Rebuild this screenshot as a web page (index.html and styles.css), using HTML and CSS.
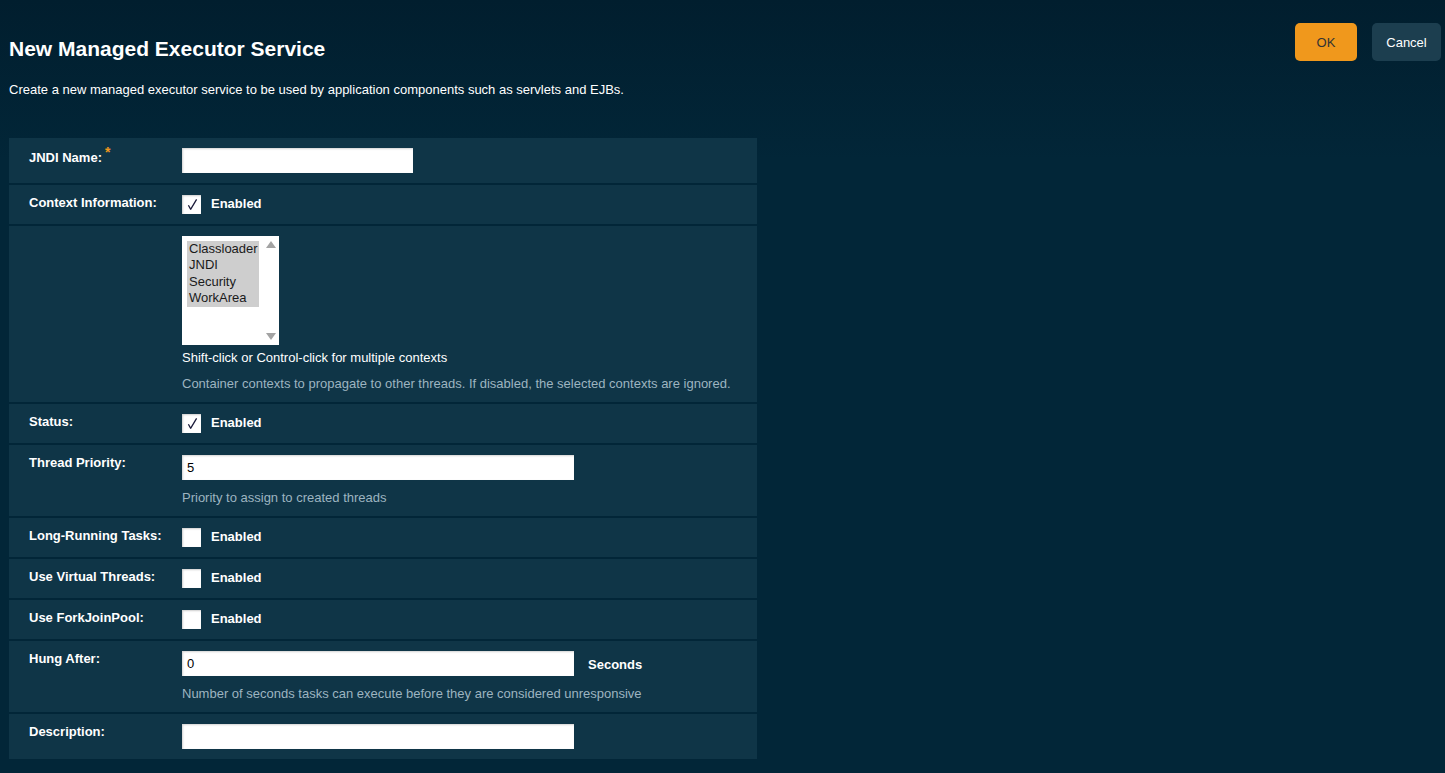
FILE: index.html
```html
<!DOCTYPE html>
<html>
<head>
<meta charset="utf-8">
<title>New Managed Executor Service</title>
<link rel="stylesheet" href="styles.css">
</head>
<body>
<div class="page">
  <header class="header">
    <div class="intro">
      <h1 class="title">New Managed Executor Service</h1>
      <p class="lead">Create a new managed executor service to be used by application components such as servlets and EJBs.</p>
    </div>
    <div class="actions">
      <button class="btn btn-ok">OK</button>
      <button class="btn btn-cancel">Cancel</button>
    </div>
  </header>

  <div class="form">
    <div class="row">
      <div class="label label-req">JNDI Name:<span class="req">*</span></div>
      <div class="control"><div class="input input-short"></div></div>
    </div>

    <div class="row">
      <div class="label">Context Information:</div>
      <div class="control">
        <div class="check-line">
          <span class="checkbox"><svg width="19" height="19" viewBox="0 0 19 19"><path d="M6.4 10.2 L8.6 14.3 L14.6 4.4" fill="none" stroke="#1b1b3a" stroke-width="1.3" stroke-linejoin="round"/></svg></span>
          <span class="check-text">Enabled</span>
        </div>
      </div>
    </div>

    <div class="row">
      <div class="label"></div>
      <div class="control">
        <div class="listbox">
          <div class="list-items">
            <div class="opt">Classloader</div>
            <div class="opt">JNDI</div>
            <div class="opt">Security</div>
            <div class="opt">WorkArea</div>
          </div>
          <div class="scroll">
            <span class="arrow-up"></span>
            <span class="arrow-down"></span>
          </div>
        </div>
        <div class="note">Shift-click or Control-click for multiple contexts</div>
        <div class="help help-gap">Container contexts to propagate to other threads. If disabled, the selected contexts are ignored.</div>
      </div>
    </div>

    <div class="row">
      <div class="label">Status:</div>
      <div class="control">
        <div class="check-line">
          <span class="checkbox"><svg width="19" height="19" viewBox="0 0 19 19"><path d="M6.4 10.2 L8.6 14.3 L14.6 4.4" fill="none" stroke="#1b1b3a" stroke-width="1.3" stroke-linejoin="round"/></svg></span>
          <span class="check-text">Enabled</span>
        </div>
      </div>
    </div>

    <div class="row">
      <div class="label">Thread Priority:</div>
      <div class="control">
        <div class="input input-long">5</div>
        <div class="help">Priority to assign to created threads</div>
      </div>
    </div>

    <div class="row">
      <div class="label">Long-Running Tasks:</div>
      <div class="control">
        <div class="check-line">
          <span class="checkbox"></span>
          <span class="check-text">Enabled</span>
        </div>
      </div>
    </div>

    <div class="row">
      <div class="label">Use Virtual Threads:</div>
      <div class="control">
        <div class="check-line">
          <span class="checkbox"></span>
          <span class="check-text">Enabled</span>
        </div>
      </div>
    </div>

    <div class="row">
      <div class="label">Use ForkJoinPool:</div>
      <div class="control">
        <div class="check-line">
          <span class="checkbox"></span>
          <span class="check-text">Enabled</span>
        </div>
      </div>
    </div>

    <div class="row">
      <div class="label">Hung After:</div>
      <div class="control">
        <div class="input-line">
          <div class="input input-long">0</div>
          <span class="unit">Seconds</span>
        </div>
        <div class="help">Number of seconds tasks can execute before they are considered unresponsive</div>
      </div>
    </div>

    <div class="row">
      <div class="label">Description:</div>
      <div class="control"><div class="input input-long"></div></div>
    </div>
  </div>
</div>
</body>
</html>
```

FILE: styles.css
```css
* { box-sizing: border-box; }

html, body {
  margin: 0;
  padding: 0;
}

body {
  background: linear-gradient(#011e2e 0px, #022638 160px, #022638 100%);
  min-height: 773px;
  font-family: "Liberation Sans", Arial, sans-serif;
  color: #ffffff;
  font-size: 13px;
}

.page {
  padding: 23px 4px 0 9px;
}

.header {
  display: flex;
  justify-content: space-between;
  align-items: flex-start;
}

.title {
  margin: 14px 0 0 0;
  font-size: 21px;
  line-height: 24px;
  font-weight: bold;
}

.lead {
  margin: 21px 0 0 0;
  font-size: 13px;
  line-height: 15px;
}

.actions {
  display: flex;
  gap: 15px;
}

.btn {
  height: 38px;
  border: none;
  border-radius: 5px;
  font-family: "Liberation Sans", Arial, sans-serif;
  font-size: 13px;
  padding: 0 14px;
  min-width: 62px;
}

.btn-ok {
  background: #f0981c;
  color: #333333;
}

.btn-cancel {
  background: #1c3e4f;
  color: #ffffff;
  min-width: 69px;
}

.form {
  margin-top: 41px;
  width: 748px;
  display: flex;
  flex-direction: column;
  gap: 2px;
}

.row {
  display: flex;
  background: #0f3547;
  padding: 10px 20px 10px 20px;
}

.label {
  width: 153px;
  flex: none;
  font-weight: bold;
  font-size: 13px;
  line-height: 15px;
  white-space: nowrap;
}

.label-req {
  padding-top: 2px;
}

.req {
  color: #f0981c;
  font-size: 14px;
  position: relative;
  top: -5px;
  margin-left: 3px;
}

.control {
  display: flex;
  flex-direction: column;
  align-items: flex-start;
}

.input {
  height: 25px;
  background: #ffffff;
  box-shadow: inset 1px 1px 2px rgba(0, 0, 0, 0.18);
  color: #000000;
  font-size: 13px;
  line-height: 25px;
  padding-left: 5px;
}

.input-short { width: 231px; }
.input-long { width: 392px; }

.input-line {
  display: flex;
  align-items: center;
  gap: 14px;
}

.unit {
  font-weight: bold;
  font-size: 13px;
  position: relative;
  top: 1px;
}

.check-line {
  display: flex;
  align-items: center;
  gap: 10px;
  height: 19px;
}

.checkbox {
  width: 19px;
  height: 19px;
  background: #ffffff;
  box-shadow: inset 1px 1px 2px rgba(0, 0, 0, 0.2);
  display: block;
}

.checkbox svg { display: block; }

.check-text {
  font-weight: bold;
  font-size: 13px;
  line-height: 15px;
  position: relative;
  top: -1px;
}

.help {
  color: #9db4c0;
  font-size: 13px;
  line-height: 15px;
  margin-top: 10px;
  margin-bottom: 1px;
}

.help-gap { margin-top: 11px; margin-bottom: 1px; }

.note {
  margin-top: 5px;
  font-size: 13px;
  line-height: 15px;
  color: #ffffff;
}

.listbox {
  width: 97px;
  height: 109px;
  background: #ffffff;
  display: flex;
  justify-content: space-between;
  padding: 5px 0 0 5px;
}

.list-items {
  width: 72px;
  align-self: flex-start;
  background: #cecece;
}

.opt {
  color: #1a1a1a;
  font-size: 13px;
  line-height: 16.4px;
  padding-left: 2px;
  white-space: nowrap;
}

.scroll {
  width: 17px;
  height: 104px;
  display: flex;
  flex-direction: column;
  justify-content: space-between;
  align-items: center;
  padding: 0 0 5px 0;
}

.arrow-up, .arrow-down {
  width: 0;
  height: 0;
  border-left: 5px solid transparent;
  border-right: 5px solid transparent;
}

.arrow-up { border-bottom: 7px solid #a3a3a3; }
.arrow-down { border-top: 7px solid #a3a3a3; }
```
